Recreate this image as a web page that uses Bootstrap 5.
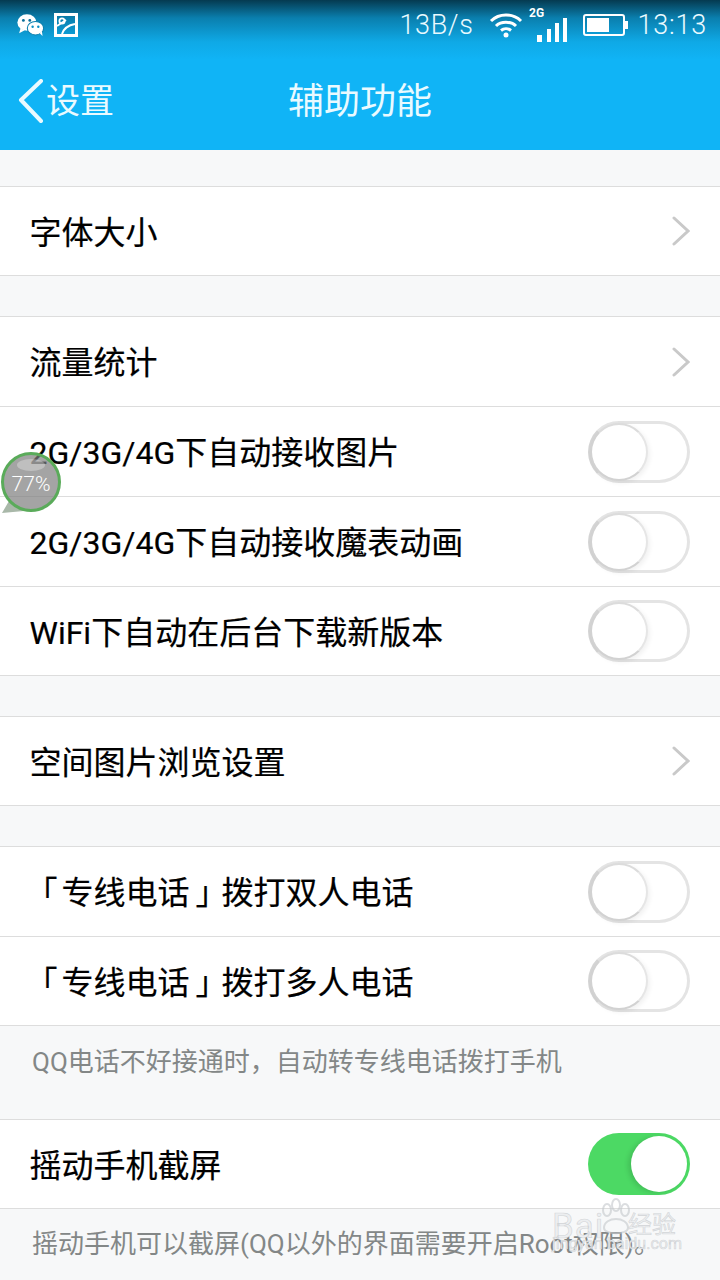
<!DOCTYPE html>
<html lang="zh">
<head>
<meta charset="utf-8">
<title>辅助功能</title>
<link href="https://cdn.jsdelivr.net/npm/bootstrap@5.3.0/dist/css/bootstrap.min.css" rel="stylesheet">
<style>
html,body{margin:0;width:720px;height:1280px;overflow:hidden}
body{background:#f7f8f9;font-family:Roboto,"Noto Sans CJK SC",sans-serif;color:#111;position:relative}
.app-head{height:150px;background:linear-gradient(180deg,#053a50 0,#0a7fae 18px,#0fa9e6 42px,#10b4f6 60px,#10b4f6 100%);color:#eafaff}
.stat-bar{height:50px;padding:0 13px 0 17px}
.stat-txt{font-size:27px;font-weight:300;line-height:1;letter-spacing:.6px}
.stat-clock{margin-left:8px;letter-spacing:.8px}
.stat-pic{margin-left:10px}
.stat-batt{margin-left:14px}
.nav-line{height:100px;position:relative;padding-top:27px}
.nav-back{position:absolute;left:18px;top:29px;display:flex;align-items:center}
.nav-back span{font-size:34px;line-height:44px;margin-left:1px}
.nav-title{font-size:36px;line-height:50px;font-weight:400}
.set-group{background:#fff;border-top:1px solid #ddd}
.set-row{height:90px;border-bottom:1px solid #ddd;padding:0 30px 0 29.5px;font-size:32px;line-height:44px;color:#000}
.set-row:last-child{height:89px}
.set-single .set-row{height:89px}
.row-lab{padding-top:3px;-webkit-text-stroke:.2px #000}
.brk-open{margin-left:-4px;margin-right:4px}
.brk-close{margin-left:6px;margin-right:-6px}
.gap-a{height:36px}
.gap-b{height:40px}
.hint-a{height:93px;padding:16px 32px 0;font-size:26px;line-height:40px;color:#838787}
.hint-b{height:71px;padding:15px 32px 0;font-size:26px;line-height:40px;color:#838787}
.tog{width:102px;height:62px;border-radius:31px;position:relative;background:#fff;border:3px solid #e4e4e4;border-left-color:#d4d4d4;flex:none}
.tog::before{content:"";position:absolute;left:-1px;top:-1px;width:58px;height:58px;border-radius:50%;background:#fff;border:2px solid #d2d2d2;border-right-color:#e6e6e6;border-top-color:#dcdcdc;box-shadow:2px 2px 5px rgba(0,0,0,.06)}
.tog-on{background:#4cd964;border:0}
.tog-on::before{left:43px;top:3px;width:56px;height:56px;border:0;box-shadow:-3px 1px 5px rgba(0,0,0,.12)}
.chev{flex:none}
.float-ball{position:absolute;left:0;top:451px;width:64px;height:64px}
.float-txt{position:absolute;left:1px;top:20px;width:60px;text-align:center;font-size:21px;line-height:26px;color:#fff;font-weight:300}
.wm{position:absolute;left:552px;top:1200px;width:132px;height:70px;color:#eceef0;-webkit-text-stroke:.6px rgba(185,188,192,.55)}
.wm-a{position:absolute;left:0;top:7px;font-size:35px;line-height:40px;font-weight:400;letter-spacing:1px}
.wm-b{position:absolute;left:76px;top:8px;font-size:24px;line-height:34px}
.wm-c{position:absolute;left:0;top:34px;font-size:16px;line-height:20px;white-space:nowrap}
</style>
</head>
<body>
<header class="app-head">
  <div class="stat-bar d-flex align-items-center">
    <svg width="27" height="22" viewBox="0 0 38 31" fill="#fff"><ellipse cx="14" cy="12" rx="13.500" ry="11.500"/><path d="M5 20l-2 7 8-4z"/><ellipse cx="26" cy="20" rx="11.500" ry="9.500" stroke="#0a7fae" stroke-width="1.500"/><path d="M32 27l4 4-1-7z"/><circle cx="9" cy="9" r="2" fill="#0a6e98"/><circle cx="18" cy="9" r="2" fill="#0a6e98"/><circle cx="22" cy="18" r="1.700" fill="#0a8fc4"/><circle cx="30" cy="18" r="1.700" fill="#0a8fc4"/></svg>
    <svg class="stat-pic" width="24" height="24" viewBox="0 0 24 24" fill="none" stroke="#fff"><rect x="1.500" y="1.500" width="21" height="21" stroke-width="3"/><circle cx="8" cy="8" r="2.600" stroke-width="1.800"/><path d="M3 13 12 7M8 21C10 15 15 12 21 11" stroke-width="2"/></svg>
    <span class="stat-txt ms-auto">13B/s</span>
    <svg class="ms-3" width="34" height="26" viewBox="0 0 34 26" fill="none" stroke="#fff" stroke-width="3"><path d="M2 9C10 1 24 1 32 9M7 14C12 9 22 9 27 14M12 18.500C15 16 19 16 22 18.500"/><circle cx="17" cy="23" r="2.500" fill="#fff" stroke="none"/></svg>
    <svg class="ms-1" width="42" height="40" viewBox="0 0 42 40"><text x="2" y="12" font-family="Roboto,sans-serif" font-size="12" font-weight="700" fill="#fff">2G</text><g fill="#fff"><rect x="10" y="30" width="5" height="7"/><rect x="20" y="24" width="4" height="13"/><rect x="28" y="18" width="4" height="19"/><rect x="36" y="13" width="4" height="24"/></g></svg>
    <svg class="stat-batt" width="46" height="24" viewBox="0 0 46 24"><rect x="1" y="2" width="40" height="20" rx="2" fill="none" stroke="#fff" stroke-width="2"/><rect x="4" y="5" width="22" height="14" fill="#fff"/><rect x="42" y="8" width="3" height="8" fill="#fff"/></svg>
    <span class="stat-txt stat-clock">13:13</span>
  </div>
  <div class="nav-line text-center">
    <div class="nav-back">
      <svg width="27" height="44" viewBox="0 0 27 44" fill="none" stroke="#eafaff" stroke-width="4" stroke-linecap="round" stroke-linejoin="round"><path d="M23 2 3 21l20 21"/></svg>
      <span>设置</span>
    </div>
    <div class="nav-title">辅助功能</div>
  </div>
</header>

<div class="gap-a"></div>
<section class="set-group set-single">
  <div class="set-row d-flex align-items-center justify-content-between"><span class="row-lab">字体大小</span>
    <svg class="chev" width="18" height="30" viewBox="0 0 18 30" fill="none" stroke="#c9c9c9" stroke-width="3" stroke-linecap="round"><path d="M2 2l14 13L2 28"/></svg></div>
</section>
<div class="gap-b"></div>
<section class="set-group">
  <div class="set-row d-flex align-items-center justify-content-between"><span class="row-lab">流量统计</span>
    <svg class="chev" width="18" height="30" viewBox="0 0 18 30" fill="none" stroke="#c9c9c9" stroke-width="3" stroke-linecap="round"><path d="M2 2l14 13L2 28"/></svg></div>
  <div class="set-row d-flex align-items-center justify-content-between"><span class="row-lab">2G/3G/4G下自动接收图片</span><div class="tog"></div></div>
  <div class="set-row d-flex align-items-center justify-content-between"><span class="row-lab">2G/3G/4G下自动接收魔表动画</span><div class="tog"></div></div>
  <div class="set-row d-flex align-items-center justify-content-between"><span class="row-lab">WiFi下自动在后台下载新版本</span><div class="tog"></div></div>
</section>
<div class="gap-b"></div>
<section class="set-group set-single">
  <div class="set-row d-flex align-items-center justify-content-between"><span class="row-lab">空间图片浏览设置</span>
    <svg class="chev" width="18" height="30" viewBox="0 0 18 30" fill="none" stroke="#c9c9c9" stroke-width="3" stroke-linecap="round"><path d="M2 2l14 13L2 28"/></svg></div>
</section>
<div class="gap-b"></div>
<section class="set-group">
  <div class="set-row d-flex align-items-center justify-content-between"><span class="row-lab"><span class="brk-open">「</span>专线电话<span class="brk-close">」</span>拨打双人电话</span><div class="tog"></div></div>
  <div class="set-row d-flex align-items-center justify-content-between"><span class="row-lab"><span class="brk-open">「</span>专线电话<span class="brk-close">」</span>拨打多人电话</span><div class="tog"></div></div>
</section>
<div class="hint-a">QQ电话不好接通时，自动转专线电话拨打手机</div>
<section class="set-group set-single">
  <div class="set-row d-flex align-items-center justify-content-between"><span class="row-lab">摇动手机截屏</span><div class="tog tog-on"></div></div>
</section>
<div class="hint-b">摇动手机可以截屏(QQ以外的界面需要开启Root权限)。</div>

<div class="float-ball">
  <svg width="64" height="64" viewBox="0 0 64 64"><path d="M2 62 9 50 24 60z" fill="#a9b8a9"/><circle cx="31" cy="31" r="28.500" fill="rgba(125,125,125,.7)" stroke="#5aab5a" stroke-width="3"/><ellipse cx="31" cy="14" rx="14" ry="6" fill="rgba(255,255,255,.3)"/></svg>
  <div class="float-txt">77%</div>
</div>

<div class="wm">
  <span class="wm-a">Bai</span>
  <svg style="position:absolute;left:46px;top:-2px" width="36" height="42" viewBox="0 0 36 42" fill="none" stroke="#c4c8cc" stroke-width="2" opacity=".6"><ellipse cx="9" cy="12" rx="4" ry="6"/><ellipse cx="18" cy="7" rx="4" ry="6"/><ellipse cx="27" cy="12" rx="4" ry="6"/><path d="M6 30c0-12 24-12 24 0 0 7-24 7-24 0z"/></svg>
  <span class="wm-b">经验</span>
  <span class="wm-c">jingyan.baidu.com</span>
</div>
</body>
</html>
